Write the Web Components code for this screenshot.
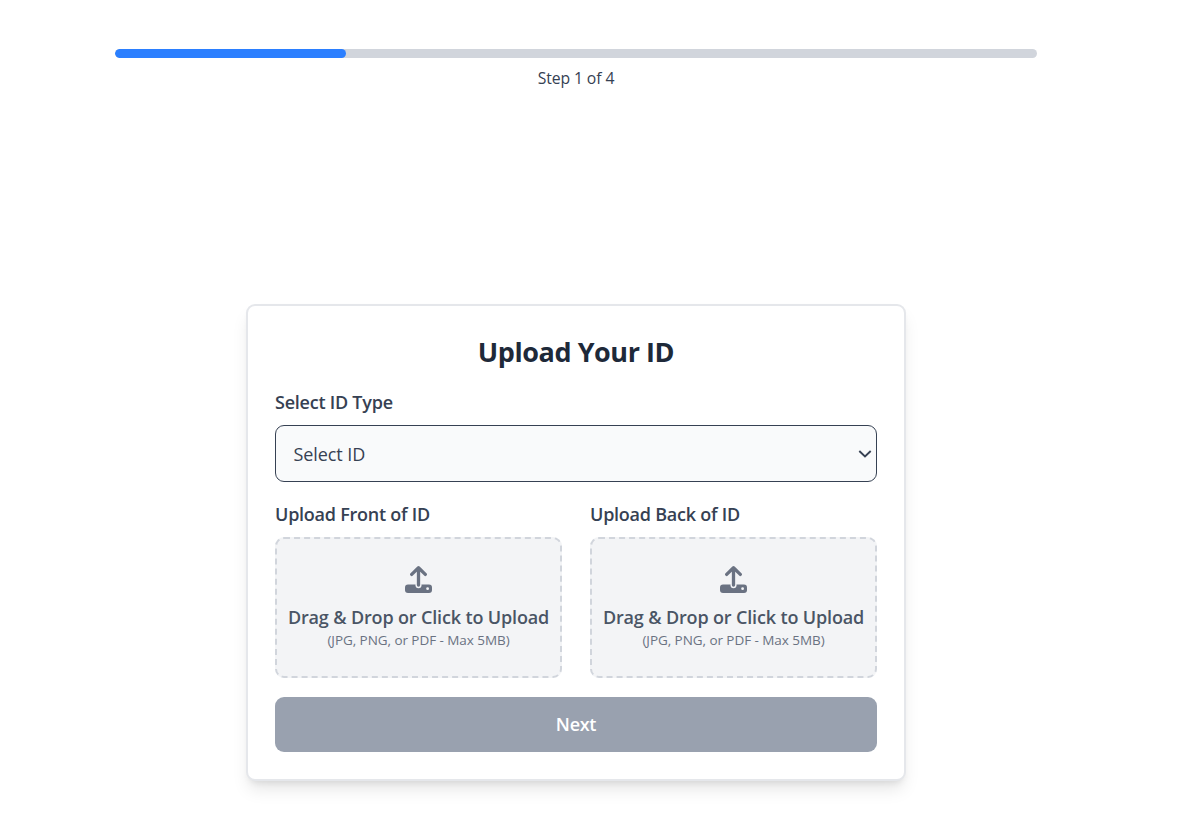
<!DOCTYPE html>
<html lang="en">
<head>
<meta charset="utf-8">
<title>Upload Your ID</title>
<style>
  html, body { margin: 0; background: #fff; }
  body { height: 836px; overflow: hidden; font-family: "Open Sans", "Noto Sans", sans-serif; }
</style>
</head>
<body>
<verify-page>
  <step-progress slot="progress" step="1" total="4"></step-progress>
  <form-card heading="Upload Your ID">
    <form-field label="Select ID Type"><id-select>Select ID</id-select></form-field>
    <upload-row>
      <form-field label="Upload Front of ID"><drop-zone></drop-zone></form-field>
      <form-field label="Upload Back of ID"><drop-zone></drop-zone></form-field>
    </upload-row>
    <next-button>Next</next-button>
  </form-card>
</verify-page>
<script>
  const define = (name, html, setup) => customElements.define(name, class extends HTMLElement {
    connectedCallback() {
      if (this.shadowRoot) return;
      this.attachShadow({ mode: 'open' }).innerHTML = html;
      if (setup) setup(this, this.shadowRoot);
    }
  });

  define('verify-page', `
    <style>
      :host { display: flex; flex-direction: column; align-items: center; width: 1152px; padding-top: 49px; }
      main { margin-top: 214px; }
    </style>
    <slot name="progress"></slot>
    <main><slot></slot></main>`);

  define('step-progress', `
    <style>
      :host { display: block; width: 922px; }
      .track { height: 9px; border-radius: 5px; background: #d1d5dc; overflow: hidden; }
      .fill { height: 100%; border-radius: 5px; background: #2b7fff; }
      p { margin: 9px 0 0; height: 23px; line-height: 23px; font-size: 15.75px; letter-spacing: -.1px; color: #364153; text-align: center; }
    </style>
    <div class="track"><div class="fill"></div></div>
    <p></p>`, (host, root) => {
      const step = host.getAttribute('step'), total = host.getAttribute('total');
      root.querySelector('.fill').style.width = `${step / total * 100}%`;
      root.querySelector('p').textContent = `Step ${step} of ${total}`;
    });

  define('form-card', `
    <style>
      :host { display: block; box-sizing: border-box; width: 660px; padding: 27px; border: 2px solid #e5e7eb; border-radius: 9px;
        background: #fff; box-shadow: 0 11px 17px -3px rgba(0,0,0,.1), 0 4.5px 7px -4px rgba(0,0,0,.1); }
      h2 { margin: 0 0 19px; height: 37px; line-height: 37px; font-size: 27px; font-weight: 700; letter-spacing: -.43px; color: #1e2939; text-align: center; }
      div { display: flex; flex-direction: column; gap: 19px; }
    </style>
    <h2></h2>
    <div><slot></slot></div>`, (host, root) => {
      root.querySelector('h2').textContent = host.getAttribute('heading');
    });

  define('form-field', `
    <style>
      :host { display: block; flex: 1; }
      label { display: block; margin-bottom: 10px; height: 26px; line-height: 26px; font-size: 18px; font-weight: 600; letter-spacing: -.24px; color: #364153; }
    </style>
    <label></label>
    <slot></slot>`, (host, root) => {
      root.querySelector('label').textContent = host.getAttribute('label');
    });

  define('id-select', `
    <style>
      :host { display: flex; align-items: center; justify-content: space-between; box-sizing: border-box; height: 57px;
        padding: 0 4px 0 17.5px; border: 1px solid #364153; border-radius: 9px; background: #f9fafb;
        color: #364153; font-size: 18px; font-weight: 400; letter-spacing: -.08px; }
      svg { display: block; }
    </style>
    <span><slot></slot></span>
    <svg width="14" height="10" viewBox="0 0 14 10" fill="none" stroke="#364153" stroke-width="1.9"><path d="M1.3 2 7 7.4 12.7 2"/></svg>`);

  define('upload-row', `
    <style>:host { display: flex; gap: 28px; }</style>
    <slot></slot>`);

  define('drop-zone', `
    <style>
      :host { display: flex; flex-direction: column; align-items: center; box-sizing: border-box; height: 141px; padding-top: 27px;
        border: 2px dashed #d1d5dc; border-radius: 9px; background: #f3f4f6; white-space: nowrap; }
      svg { display: block; margin-bottom: 11px; }
      .main { height: 26px; line-height: 26px; font-size: 18px; font-weight: 600; letter-spacing: -.15px; color: #4a5565; }
      .hint { height: 20px; line-height: 20px; font-size: 13.5px; letter-spacing: -.06px; color: #6a7282; }
    </style>
    <svg width="27" height="27" viewBox="0 0 27 27">
      <rect x="0" y="18.4" width="27" height="8.6" rx="3" fill="#6a7282"/>
      <path d="M13.5 12V19.2" fill="none" stroke="#f3f4f6" stroke-width="6" stroke-linecap="round"/>
      <path d="M13.5 2V19M6.7 8.4 13.5 1.8 20.3 8.4" fill="none" stroke="#6a7282" stroke-width="3.3" stroke-linecap="round" stroke-linejoin="round"/>
      <circle cx="22.6" cy="22.7" r="1.4" fill="#f3f4f6"/>
    </svg>
    <div class="main">Drag &amp; Drop or Click to Upload</div>
    <div class="hint">(JPG, PNG, or PDF - Max 5MB)</div>`);

  define('next-button', `
    <style>
      :host { display: block; }
      button { display: block; width: 100%; height: 55px; padding: 0 0 2px; border: 0; border-radius: 9px; background: #99a1af;
        color: #fff; font: 600 18px "Open Sans", "Noto Sans", sans-serif; letter-spacing: -.3px; }
    </style>
    <button><slot></slot></button>`);
</script>
</body>
</html>
